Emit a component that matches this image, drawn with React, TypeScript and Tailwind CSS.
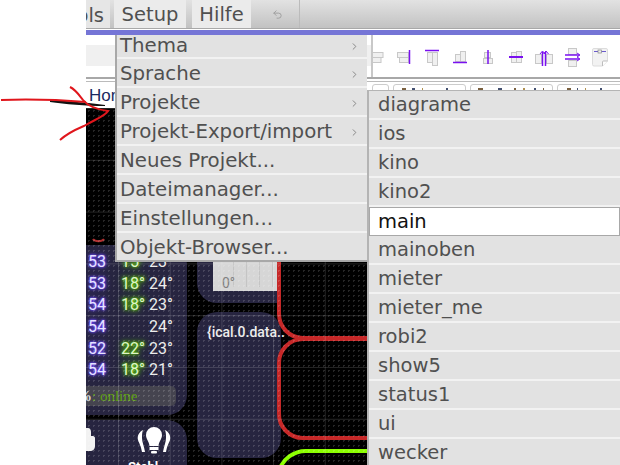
import { ChevronRight, Undo2 } from "lucide-react";

const mainMenu = [
  { label: "Thema", sub: true },
  { label: "Sprache", sub: true },
  { label: "Projekte", sub: true },
  { label: "Projekt-Export/import", sub: true },
  { label: "Neues Projekt...", sub: false },
  { label: "Dateimanager...", sub: false },
  { label: "Einstellungen...", sub: false },
  { label: "Objekt-Browser...", sub: false },
];

const projects = [
  "diagrame",
  "ios",
  "kino",
  "kino2",
  "main",
  "mainoben",
  "mieter",
  "mieter_me",
  "robi2",
  "show5",
  "status1",
  "ui",
  "wecker",
];

const weather = [
  ["53", "15°", "23°"],
  ["53", "18°", "24°"],
  ["54", "18°", "23°"],
  ["54", "", "24°"],
  ["52", "22°", "23°"],
  ["54", "18°", "21°"],
];

// coordinates in the viewBox are the page's own pixels
function ToolIcons() {
  return (
    <svg width="247" height="42" viewBox="373 35 247 42" fill="none">
      <g fill="#f0f0f0" stroke="#c8c8c8" strokeWidth="1">
        <rect x="370" y="52.500" width="13" height="5" />
        <rect x="370" y="57.500" width="11" height="5" />
        <rect x="397.500" y="52.500" width="11" height="5" />
        <rect x="399.500" y="57.500" width="9" height="5" />
        <rect x="427.500" y="52.500" width="5" height="10" />
        <rect x="432.500" y="52.500" width="5" height="13" />
        <rect x="455.500" y="54.500" width="5" height="7" />
        <rect x="460.500" y="51.500" width="5" height="10" />
        <rect x="484.500" y="52.500" width="6" height="5" />
        <rect x="483.500" y="58.500" width="9" height="5" />
        <rect x="511.500" y="52.500" width="5" height="10" />
        <rect x="516.500" y="51.500" width="5" height="11" />
        <rect x="535.500" y="54.500" width="6" height="9" />
        <rect x="546.500" y="54.500" width="6" height="9" />
        <rect x="568.500" y="48.500" width="8" height="6" />
        <rect x="568.500" y="60.500" width="8" height="6" />
      </g>
      <g stroke="#7a10f0" strokeWidth="1.500">
        <path d="M409.500 50v14" />
        <path d="M425 50.500h14" />
        <path d="M453 62.500h14" />
        <path d="M488 50v14" />
        <path d="M509 57h14" strokeWidth="2" />
        <path d="M542.500 52v14M545.500 52v14" />
        <path d="M540 54l2.500-3 2.500 3M543.500 54l2.500-3 2.500 3" strokeWidth="1" />
        <path d="M565 55h14M565 59h14" />
        <path d="M577 53l3 2-3 2M577 57l3 2-3 2" strokeWidth="1" />
      </g>
      <path d="M594 48.500h12a1.500 1.500 0 0 1 1.500 1.500v11l-5 5H594a1.500 1.500 0 0 1-1.500-1.500V50a1.500 1.500 0 0 1 1.500-1.500z" fill="#f2f2f2" stroke="#dcdcdc" />
      <path d="M602.500 66v-4a1 1 0 0 1 1-1h4" fill="#fff" stroke="#bdbdbd" />
      <path d="M594 51.500h12" stroke="#6a5acd" strokeWidth="1" />
      <rect x="598" y="50" width="3.500" height="3" fill="#eee" stroke="#888" strokeWidth="0.700" />
    </svg>
  );
}

function BulbIcon() {
  return (
    <svg width="34" height="30" viewBox="0 0 34 30" fill="#fff">
      <path d="M17 1a8 8 0 0 1 8 8c0 4-3 6-3.500 11h-9C12 15 9 13 9 9a8 8 0 0 1 8-8z" />
      <rect x="12.500" y="21" width="9" height="3" />
      <rect x="14" y="25" width="6" height="2.500" rx="1" />
      <path d="M6 4C2 6 0 10 1 14c1 3 3 6 4 12h3C7 20 5 16 5 12c0-3 0-5 1-8z" />
      <path d="M28 4c4 2 6 6 5 10-1 3-3 6-4 12h-3c1-6 3-10 3-14 0-3 0-5-1-8z" />
    </svg>
  );
}

function Canvas() {
  return (
    <div className="relative flex-1 overflow-hidden bg-black font-['Roboto',sans-serif]">
      {/* left weather panel */}
      <div className="absolute left-0 top-[137px] h-[170px] w-[101px] rounded-br-[20px] rounded-tr-[20px] bg-[#272540]">
        <div className="absolute left-[2px] top-[6px] flex flex-col text-[16px] leading-[21.7px] text-white">
          {weather.map((row, i) => (
            <div key={i} className="flex h-[21.7px]">
              <span className="w-[33px] text-[#e6e2ff] [text-shadow:0_0_6px_#6a48ff,0_0_3px_#6a48ff,0_0_2px_#6a48ff]">
                {row[0]}
              </span>
              <span className="w-[28px] text-[#dff3c8] [text-shadow:0_0_7px_#5fd000,0_0_4px_#5fd000,0_0_2px_#4fa800]">
                {row[1]}
              </span>
              <span className="text-[#ececec]">{row[2]}</span>
            </div>
          ))}
        </div>
        <div className="absolute left-0 top-[141px] flex h-[20px] w-[90px] items-center overflow-hidden rounded-r-[5px] bg-[#45444f] font-['Liberation_Serif',serif] text-[15px]">
          <span className="-ml-[9px] whitespace-pre font-bold text-[#ddd]">%</span>
          <span className="whitespace-pre text-[#5ea010]">: online</span>
        </div>
      </div>

      {/* bottom tile */}
      <div className="absolute left-0 top-[312px] h-[45px] w-[101px] rounded-tr-[20px] bg-[#272540] text-white">
        <svg className="absolute left-0 top-[8px]" width="10" height="25" viewBox="0 0 10 25" fill="#f2f2f2">
          <path d="M0 0h2c2 0 3 2 3 4v4h2c1 0 2 1 2 2v8c0 3-2 5-5 5H0z" />
        </svg>
        <div className="absolute left-[51px] top-[6px]">
          <BulbIcon />
        </div>
        <div className="absolute left-[42px] top-[39px] text-[13px] font-bold leading-[15px]">Stehl</div>
      </div>

      {/* centre tiles */}
      <div className="absolute left-[111px] top-[100px] h-[95px] w-[84px] rounded-bl-[20px] bg-[#272540]">
        <div className="absolute left-[16px] top-[37px] h-[46px] w-[64px] bg-[#d6d6d6] text-[14px] leading-[20px] text-[#808080]">
          <div className="absolute bottom-[4px] left-[20px] right-0 top-0 bg-[repeating-linear-gradient(to_right,#c4c4c4_0px,#c4c4c4_1px,transparent_1px,transparent_13px)]" />
          <span className="absolute left-[9px] top-[2px]">0°</span>
          <span className="absolute left-[9px] top-[28px]">0°</span>
        </div>
      </div>
      <div className="absolute left-[111px] top-[204px] h-[146px] w-[84px] rounded-[20px] bg-[#272540]">
        <div className="absolute left-[10px] top-[10px] whitespace-nowrap text-[14px] font-medium text-[#ececec]">
          {"{ical.0.data.."}
        </div>
      </div>

      {/* connectors */}
      <svg className="absolute left-0 top-0" width="534" height="357" fill="none" strokeWidth="4">
        <path d="M193 120v86a24 24 0 0 0 24 24h64" stroke="#c62828" />
        <path d="M281 231h-64a24 24 0 0 0-24 24v50a24 24 0 0 0 25 25h63" stroke="#c62828" />
        <path d="M281 343h-60a28 28 0 0 0-28 20" stroke="#8cff00" />
        <path d="M7 131c2 3 9 3 11 0" stroke="#b03030" strokeWidth="2" />
      </svg>

      {/* grid + dots sit on top of the widgets */}
      <div className="pointer-events-none absolute inset-0 bg-[linear-gradient(to_right,rgba(255,255,255,0.14)_1px,transparent_1px),linear-gradient(to_bottom,rgba(255,255,255,0.14)_1px,transparent_1px)] bg-[size:51.700px_51.800px] bg-[position:32px_0px]" />
      <div className="pointer-events-none absolute inset-0 bg-[radial-gradient(circle,rgba(255,255,255,0.15)_1px,transparent_1px)] bg-[size:5px_5px]" />
    </div>
  );
}

const tabSpecks = [
  { x: 316, w: 4, c: "bg-[#7a6040]" },
  { x: 326, w: 3, c: "bg-[#445070]" },
  { x: 336, w: 1, c: "bg-[#b09050]" },
  { x: 360, w: 2, c: "bg-[#445070]" },
  { x: 392, w: 5, c: "bg-[#7a6040]" },
  { x: 412, w: 4, c: "bg-[#445070]" },
  { x: 428, w: 2, c: "bg-[#7a6040]" },
  { x: 437, w: 2, c: "bg-[#b09050]" },
  { x: 448, w: 2, c: "bg-[#445070]" },
  { x: 457, w: 1, c: "bg-[#7a6040]" },
  { x: 481, w: 4, c: "bg-[#7a6040]" },
  { x: 491, w: 1, c: "bg-[#445070]" },
  { x: 499, w: 1, c: "bg-[#b09050]" },
  { x: 514, w: 2, c: "bg-[#445070]" },
];

export default function App() {
  return (
    <div className="relative flex h-[465px] w-[620px] overflow-hidden bg-white font-['DejaVu_Sans',sans-serif] text-[19.500px] text-[#505050]">
      <div className="w-[86px] shrink-0 bg-white" />

      <div className="flex min-w-0 flex-1 flex-col">
        {/* menu bar */}
        <div className="flex h-[29px] shrink-0 border-b border-[#a8a8a8] bg-[linear-gradient(to_bottom,#e2e2e2,#c2c2c2)]">
          <div className="flex h-[28px] w-[24px] justify-end overflow-hidden bg-[#e6e6e6] pr-[6px] pt-[1px]">
            <span className="whitespace-nowrap">Tools</span>
          </div>
          <div className="ml-[4px] flex h-[28px] w-[72px] items-center justify-center bg-[#ebebeb] pt-[1px]">Setup</div>
          <div className="ml-[6px] flex h-[28px] w-[59px] items-center justify-center bg-[#ebebeb] pt-[1px]">Hilfe</div>
          <div className="ml-[4px] flex h-[28px] w-[45px] items-center justify-center border-r border-[#bbb]">
            <Undo2 size={11} strokeWidth={2} className="text-[#9c9c9c]" />
          </div>
        </div>
        <div className="h-[6px] shrink-0 border-t border-white bg-[#7575d6]" />

        {/* toolbar */}
        <div className="flex h-[42px] shrink-0">
          <div className="flex w-[285px] flex-col">
            <div className="h-[10px] bg-white" />
            <div className="h-[21px] bg-[#f0f0f0]" />
          </div>
          <div className="ml-auto w-[249px] border-l-2 border-[#c8c8c8]">
            <ToolIcons />
          </div>
        </div>

        {/* tab strip */}
        <div className="h-[31px] shrink-0 border-t-2 border-[#a8a8a8] bg-white pt-[2px]">
          <div className="h-[1px] bg-[#bbb]" />
          <div className="relative h-[25px] overflow-hidden">
            <span className="absolute left-[3px] top-[4px] font-['Liberation_Sans',sans-serif] text-[17px] leading-[20px] text-[#1c2a60]">Home</span>
            <div className="absolute left-[286px] top-[2px] h-[30px] w-[17px] rounded-t-[3px] border border-[#ccc]" />
            <div className="absolute left-[307px] top-[2px] h-[30px] w-[73px] rounded-t-[3px] border border-[#ccc]" />
            <div className="absolute left-[384px] top-[2px] h-[30px] w-[83px] rounded-t-[3px] border border-[#ccc]" />
            <div className="absolute left-[471px] top-[2px] h-[30px] w-[80px] rounded-t-[3px] border border-[#ccc]" />
            {tabSpecks.map((s) => (
              <span
                key={s.x}
                className={`absolute top-[6px] h-[3px] ${s.c}`}
                style={{ left: s.x, width: s.w }}
              />
            ))}
          </div>
        </div>

        <Canvas />
      </div>

      {/* Setup dropdown */}
      <div className="absolute left-[115px] top-[35px] w-[252px] border-b-2 border-l-2 border-[#a8a8a8] bg-[#e2e2e2] text-[19.800px]">
        {mainMenu.map((item, i) => (
          <div
            key={item.label}
            className={`flex items-center justify-between border-b-2 border-[#f2f2f2] pl-[3px] pr-[7px] last:border-b-0 ${i === 0 ? "h-[24px]" : i === 7 ? "h-[27px] pt-[2px]" : "h-[29px] pt-[3px]"}`}
          >
            <span className="whitespace-nowrap">{item.label}</span>
            {item.sub && <ChevronRight size={11} strokeWidth={2} className="text-[#808080]" />}
          </div>
        ))}
      </div>

      {/* Projekte submenu */}
      <div className="absolute left-[367px] top-[90px] w-[253px] border-l-2 border-t border-[#b4b4b4] bg-[#e2e2e2]">
        {projects.map((name) =>
          name === "main" ? (
            <div key={name} className="flex h-[29px] items-center border border-[#a8a8a8] bg-white pl-[8px] text-[#111]">
              {name}
            </div>
          ) : (
            <div key={name} className="flex h-[29px] items-center border-b-2 border-[#f2f2f2] pl-[9px]">
              {name}
            </div>
          ),
        )}
      </div>

      {/* hand drawn annotation */}
      <svg className="pointer-events-none absolute left-0 top-0" width="120" height="150" fill="none">
        <path d="M50 100c20 1 40 3 55 5v1c-20 0-40-2-55-4z" fill="#111" />
        <path d="M1 100c30-1 60 0 85 2" stroke="#e0161c" strokeWidth="2" />
        <path d="M70 87c6 3 9 8 13 13 4 5 10 9 25 11-3 5-12 8-24 15-7 3-15 6-24 14" stroke="#e0161c" strokeWidth="2" />
      </svg>
    </div>
  );
}
